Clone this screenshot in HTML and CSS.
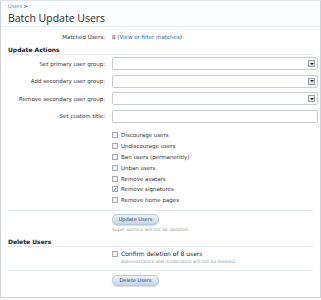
FILE: index.html
```html
<!DOCTYPE html>
<html>
<head>
    <title>Batch Update Users</title>
    <link rel="stylesheet" href="styles.css">
</head>
<body>
    <div class="page">
        <div class="title-bar">
            <div class="breadcrumb"><a href="#">Users</a> &gt;</div>
            <h1>Batch Update Users</h1>
        </div>

        <div class="row info-row">
            <div class="label">Matched Users:</div>
            <div class="control">8 (<a href="#">View or filter matches</a>)</div>
        </div>

        <h3 class="section-heading">Update Actions</h3>

        <div class="row field-row">
            <div class="label">Set primary user group:</div>
            <div class="control"><div class="select"><span class="arrow"></span></div></div>
        </div>
        <div class="row field-row">
            <div class="label">Add secondary user group:</div>
            <div class="control"><div class="select"><span class="arrow"></span></div></div>
        </div>
        <div class="row field-row">
            <div class="label">Remove secondary user group:</div>
            <div class="control"><div class="select"><span class="arrow"></span></div></div>
        </div>
        <div class="row field-row">
            <div class="label">Set custom title:</div>
            <div class="control"><div class="textbox"></div></div>
        </div>

        <div class="row checks">
            <div class="label"></div>
            <ul class="control check-list">
                <li><span class="box"></span>Discourage users</li>
                <li><span class="box"></span>Undiscourage users</li>
                <li><span class="box"></span>Ban users (permanently)</li>
                <li><span class="box"></span>Unban users</li>
                <li><span class="box"></span>Remove avatars</li>
                <li><span class="box checked">&#10003;</span>Remove signatures</li>
                <li><span class="box"></span>Remove home pages</li>
            </ul>
        </div>

        <div class="submit-unit">
            <div class="label"></div>
            <div class="control">
                <button class="button">Update Users</button>
                <p class="explain">Super admins will not be updated.</p>
            </div>
        </div>

        <h3 class="section-heading delete-heading">Delete Users</h3>

        <div class="row confirm-row">
            <div class="label"></div>
            <div class="control">
                <div class="confirm"><span class="box"></span>Confirm deletion of 8 users</div>
                <p class="explain">Administrators and moderators will not be deleted.</p>
            </div>
        </div>

        <div class="submit-unit last">
            <div class="label"></div>
            <div class="control">
                <button class="button">Delete Users</button>
            </div>
        </div>
    </div>
</body>
</html>
```

FILE: styles.css
```css
* {
    margin: 0;
    padding: 0;
    box-sizing: border-box;
}

body {
    font-family: 'DejaVu Sans', Verdana, sans-serif;
    font-size: 5.5px;
    color: #222;
    background-color: #FFFFFF;
}

a {
    color: #2b6cb5;
    text-decoration: none;
}

.page {
    width: 321px;
    height: 298px;
    border: 1px solid #cfd3d8;
    border-top-color: #e2e6ea;
    background-color: #FFFFFF;
}

.title-bar {
    height: 26px;
    padding: 2px 7px 0;
    border-bottom: 1px solid #e8eef4;
    background-color: #fbfcfd;
}

.breadcrumb {
    font-size: 5px;
    height: 7px;
    line-height: 7px;
}

.breadcrumb a {
    color: #4a7fb8;
}

h1 {
    font-family: 'Open Sans', sans-serif;
    font-weight: normal;
    font-size: 10.5px;
    line-height: 16px;
    color: #2a2a2a;
}

.row,
.submit-unit {
    display: flex;
    gap: 7px;
}

.label {
    width: 104px;
    flex-shrink: 0;
    text-align: right;
    color: #333;
}

.control {
    flex: 1;
    padding-right: 2px;
}

.info-row {
    height: 18px;
    align-items: center;
    margin-top: 1px;
}

.info-row .control {
    color: #333;
}

.section-heading {
    margin: 0 7px;
    height: 9px;
    font-size: 6px;
    line-height: 8px;
    font-weight: bold;
    color: #222;
    border-bottom: 1px solid #e4eaf0;
}

.field-row {
    height: 17.5px;
    align-items: center;
}

.field-row:first-of-type {
    margin-top: 4px;
}

.select,
.textbox {
    height: 13px;
    border: 1px solid #c8ccd0;
    border-radius: 2px;
    background-color: #FFFFFF;
    position: relative;
}

.select {
    display: flex;
    justify-content: flex-end;
    align-items: center;
    padding-right: 2px;
}

.arrow {
    width: 7px;
    height: 7px;
    border: 1px solid #9aa0a6;
    background: linear-gradient(#f4f4f4, #d8d8d8);
    display: flex;
    align-items: center;
    justify-content: center;
}

.arrow::after {
    content: '';
    border-left: 2px solid transparent;
    border-right: 2px solid transparent;
    border-top: 2px solid #222;
}

.checks {
    margin-top: 5px;
}

.check-list {
    list-style: none;
}

.check-list li,
.confirm {
    display: flex;
    align-items: center;
    height: 10.8px;
    color: #333;
}

.box {
    width: 6px;
    height: 6px;
    border: 1px solid #a8acb0;
    background-color: #f2f2f2;
    margin-right: 3px;
    font-size: 5px;
    line-height: 4px;
    text-align: center;
    color: #333;
}

.submit-unit {
    border-top: 1px solid #e4eaf0;
    margin: 4px 7px 0;
    gap: 0;
    padding-top: 3px;
    height: 29px;
}

.submit-unit .label {
    width: 104px;
}

.submit-unit .control {
    padding-left: 0;
}

.button {
    font-family: 'DejaVu Sans', Verdana, sans-serif;
    font-size: 5px;
    color: #1f3a56;
    width: 47px;
    height: 11px;
    border: 1px solid #b7c9dc;
    border-radius: 5px;
    background: linear-gradient(#eef4fa, #c4d6e9);
    box-shadow: 0 1px 1px rgba(0, 0, 0, 0.15);
}

.explain {
    font-size: 4.5px;
    color: #9aa0a6;
    margin-top: 2px;
}

.delete-heading {
    margin-top: -1px;
}

.confirm-row {
    margin-top: 2px;
    height: 21px;
}

.confirm {
    font-size: 6px;
    color: #222;
}

.confirm-row .explain {
    margin-top: 0;
    padding-left: 9px;
}

.submit-unit.last {
    margin-top: 0;
    padding-top: 4px;
}
```
